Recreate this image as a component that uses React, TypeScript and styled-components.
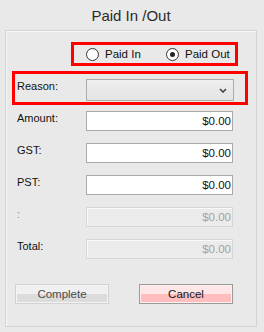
import React from "react";
import styled, { createGlobalStyle } from "styled-components";

const Global = createGlobalStyle`
  html, body { margin: 0; padding: 0; }
  body {
    background: #e9e9e9;
    font-family: "Liberation Sans", Arial, sans-serif;
    width: 264px;
    height: 332px;
    overflow: hidden;
  }
`;

const Window = styled.div`
  width: 264px;
  height: 332px;
  display: flex;
  flex-direction: column;
  background: #e9e9e9;
`;

const Title = styled.div`
  height: 30px;
  display: flex;
  align-items: center;
  justify-content: center;
  font-size: 15px;
  color: #2b2b2b;
  padding-right: 2px;
`;

const Group = styled.div`
  box-sizing: border-box;
  margin-left: 5px;
  width: 252px;
  height: 297px;
  border: 1px solid #d3d3d3;
  box-shadow: inset 1px 1px 0 #f7f7f7;
  display: flex;
  flex-direction: column;
`;

const RedBox = styled.div<{ $w: number; $h: number; $mt: number; $ml: number }>`
  box-sizing: border-box;
  width: ${(p) => p.$w}px;
  height: ${(p) => p.$h}px;
  margin-top: ${(p) => p.$mt}px;
  margin-left: ${(p) => p.$ml}px;
  border: 3px solid #ff0000;
  display: flex;
`;

const RadioRow = styled(RedBox)`
  align-items: center;
  padding-left: 12px;
`;

const RadioOption = styled.label<{ $w?: number }>`
  display: flex;
  align-items: center;
  gap: 6px;
  width: ${(p) => (p.$w ? `${p.$w}px` : "auto")};
  font-size: 11.5px;
  color: #111;
`;

const Circle = styled.span<{ $on?: boolean }>`
  box-sizing: border-box;
  width: 13px;
  height: 13px;
  border-radius: 50%;
  border: 1px solid #333;
  background: #fff;
  display: flex;
  align-items: center;
  justify-content: center;
  &::after {
    content: "";
    width: 5px;
    height: 5px;
    border-radius: 50%;
    background: ${(p) => (p.$on ? "#222" : "transparent")};
  }
`;

const ReasonRow = styled(RedBox)`
  padding: 5px 0 0 2px;
  align-items: flex-start;
`;

const Label = styled.div<{ $muted?: boolean }>`
  width: 69px;
  flex: none;
  font-size: 11px;
  line-height: 13px;
  padding-top: 1px;
  color: ${(p) => (p.$muted ? "#8f8aa0" : "#111")};
`;

const Select = styled.div`
  box-sizing: border-box;
  width: 148px;
  height: 22px;
  border: 1px solid #acacac;
  background: linear-gradient(#efefef, #e3e3e3);
  display: flex;
  align-items: center;
  justify-content: flex-end;
  padding-right: 6px;
`;

const Fields = styled.div`
  display: flex;
  flex-direction: column;
  gap: 12px;
  margin-top: 6px;
  padding-left: 11px;
`;

const Row = styled.div`
  display: flex;
  align-items: flex-start;
`;

const Input = styled.div<{ $disabled?: boolean }>`
  box-sizing: border-box;
  width: 147px;
  height: 20px;
  border: 1px solid ${(p) => (p.$disabled ? "#d6d6d6" : "#a9a9a9")};
  background: ${(p) => (p.$disabled ? "#ebebeb" : "#ffffff")};
  box-shadow: ${(p) => (p.$disabled ? "inset 1px 1px 0 #f8f8f8" : "none")};
  font-size: 11.5px;
  line-height: 18px;
  text-align: right;
  padding-right: 1px;
  color: ${(p) => (p.$disabled ? "#a2a2a2" : "#111")};
`;

const Buttons = styled.div`
  display: flex;
  gap: 30px;
  margin-top: 25px;
  padding-left: 9px;
`;

const Button = styled.div<{ $variant: "plain" | "cancel" }>`
  box-sizing: border-box;
  width: 94px;
  height: 20px;
  border: 1px solid ${(p) => (p.$variant === "cancel" ? "#9a9a9a" : "#d2d2d2")};
  box-shadow: inset 0 0 0 1px ${(p) => (p.$variant === "cancel" ? "#fff0f0" : "#f4f4f4")};
  background: ${(p) =>
    p.$variant === "cancel"
      ? "linear-gradient(#ffe6e6 0, #ffe6e6 50%, #ffbdbd 50%, #ffbdbd 100%)"
      : "linear-gradient(#f0f0f0 0, #f0f0f0 50%, #dcdcdc 50%, #dcdcdc 100%)"};
  display: flex;
  align-items: center;
  justify-content: center;
  font-size: 11.5px;
  color: ${(p) => (p.$variant === "cancel" ? "#111" : "#4a4a4a")};
`;

const Chevron = () => (
  <svg width="8" height="5" viewBox="0 0 8 5">
    <path d="M1 1 L4 4 L7 1" fill="none" stroke="#444" strokeWidth="1.6" />
  </svg>
);

const fields = [
  { label: "Amount:", disabled: false },
  { label: "GST:", disabled: false },
  { label: "PST:", disabled: false },
  { label: ":", disabled: true, muted: true },
  { label: "Total:", disabled: true },
];

export default function App() {
  return (
    <>
      <Global />
      <Window>
        <Title>Paid In /Out</Title>
        <Group>
          <RadioRow $w={167} $h={24} $mt={11} $ml={65}>
            <RadioOption $w={80}>
              <Circle />
              Paid In
            </RadioOption>
            <RadioOption>
              <Circle $on />
              Paid Out
            </RadioOption>
          </RadioRow>
          <ReasonRow $w={236} $h={34} $mt={5} $ml={6}>
            <Label>Reason:</Label>
            <Select>
              <Chevron />
            </Select>
          </ReasonRow>
          <Fields>
            {fields.map((f) => (
              <Row key={f.label}>
                <Label $muted={f.muted}>{f.label}</Label>
                <Input $disabled={f.disabled}>$0.00</Input>
              </Row>
            ))}
          </Fields>
          <Buttons>
            <Button $variant="plain">Complete</Button>
            <Button $variant="cancel">Cancel</Button>
          </Buttons>
        </Group>
      </Window>
    </>
  );
}
